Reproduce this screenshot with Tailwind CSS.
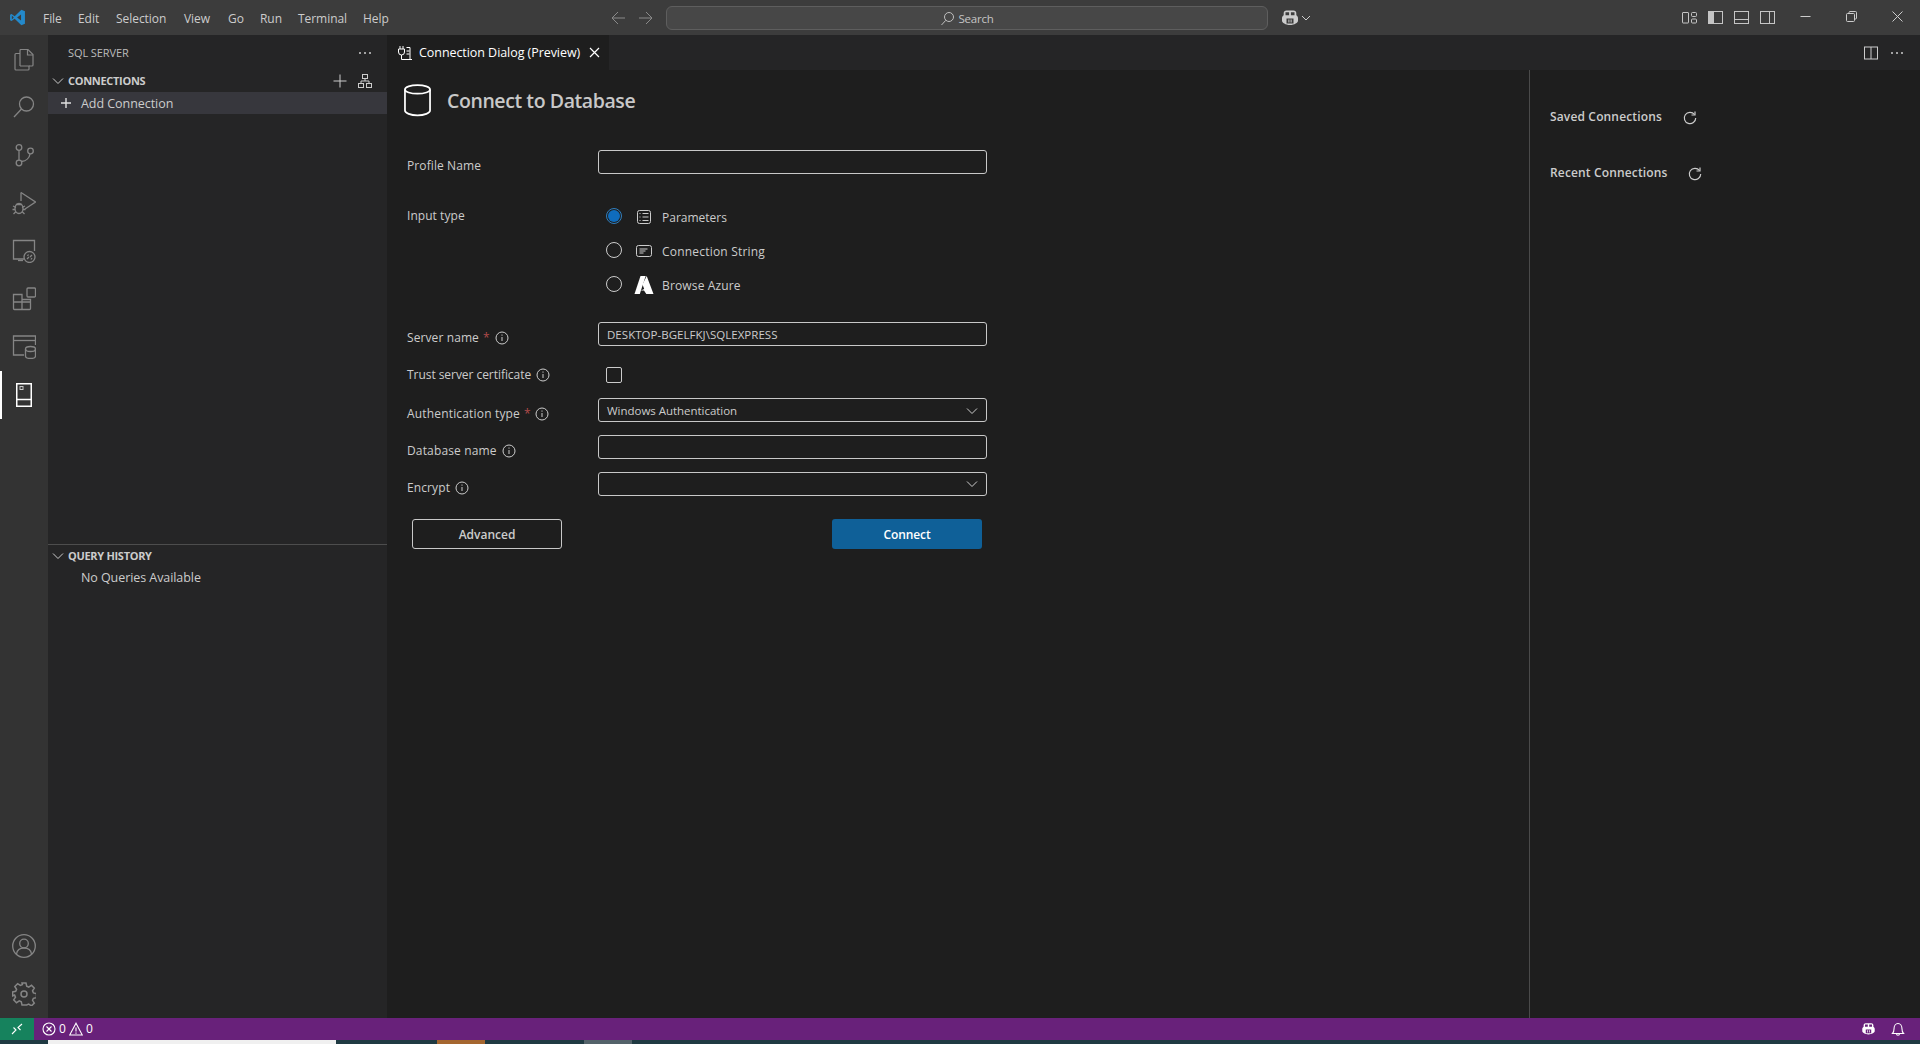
<!DOCTYPE html>
<html lang="en">
<head>
<meta charset="utf-8">
<title>Connection Dialog</title>
<script src="https://cdn.jsdelivr.net/npm/@tailwindcss/browser@4"></script>
</head>
<body class="w-[1920px] h-[1044px] overflow-hidden bg-[#1f3a42] font-['Open_Sans','Noto_Sans',sans-serif] text-[12px] text-[#cccccc]">

<!-- Title bar -->
<header class="h-[35px] bg-[#3c3c3c] flex items-center relative">
  <div class="w-[35px] flex justify-center">
    <svg width="17" height="17" viewBox="0 0 24 24"><path fill="#2489ca" d="M17.5 1 8 10.3 3.6 7 1.5 8v8l2.100 1L8 13.700 17.500 23l5-2.200V3.200zM4 14.800V9.200L6.800 12zM17 16.400 11.400 12 17 7.600z"/></svg>
  </div>
  <nav class="flex text-[#cccccc] tracking-[-0.05px] pt-[2px]">
    <span class="ml-[8px] w-[35px]">File</span>
    <span class="w-[38px]">Edit</span>
    <span class="w-[68px]">Selection</span>
    <span class="w-[44px]">View</span>
    <span class="w-[32px]">Go</span>
    <span class="w-[38px]">Run</span>
    <span class="w-[65px]">Terminal</span>
    <span>Help</span>
  </nav>
  <div class="absolute left-[611px] top-[11px] flex gap-[12px] text-[#8a8a8a]">
    <svg width="15" height="14" viewBox="0 0 15 14" fill="none" stroke="currentColor"><path d="M14 7H1M7 1 1 7l6 6"/></svg>
    <svg width="15" height="14" viewBox="0 0 15 14" fill="none" stroke="currentColor"><path d="M1 7h13M8 1l6 6-6 6"/></svg>
  </div>
  <div class="absolute left-[666px] top-[6px] w-[602px] h-[24px] rounded-[6px] border border-[#5e5e5e] bg-[#474747] flex items-center justify-center gap-[3px]">
    <svg width="15" height="15" viewBox="0 0 15 15" fill="none" stroke="#c0c0c0"><circle cx="9" cy="6" r="4.500"/><path d="M5.800 9.300 1.500 14"/></svg>
    <span class="text-[#c4c4c4] text-[11.500px] tracking-[-0.2px] pt-[1px]">Search</span>
  </div>
  <div class="absolute left-[1281px] top-[9px] flex items-center gap-[2px]">
    <svg width="18" height="18" viewBox="0 0 18 18" fill="#cccccc"><path d="M5.500 1.500h7c1.700 0 2.800 1.100 2.800 2.700v2c1 .7 1.700 1.600 1.700 2.800v3c0 1.500-3.600 4-8 4s-8-2.500-8-4V9c0-1.200.7-2.100 1.700-2.800v-2c0-1.600 1.100-2.700 2.800-2.700z"/><path fill="#3c3c3c" d="M4.500 3.200h3.600v3H4.500zM9.900 3.200h3.600v3H9.900zM5.500 9.500h7v5h-7z"/><path fill="#cccccc" d="M7.400 10.500h1v3h-1zM9.600 10.500h1v3h-1z"/></svg>
    <svg width="10" height="10" viewBox="0 0 10 10" fill="none" stroke="#cccccc"><path d="m1 3 4 4 4-4"/></svg>
  </div>
  <div class="absolute left-[1682px] top-[10px] flex gap-[11px] text-[#c5c5c5]">
    <svg width="15" height="15" viewBox="0 0 15 15" fill="none" stroke="currentColor"><rect x=".5" y="2.500" width="6" height="10.500" rx=".5"/><rect x="9.500" y="2.500" width="5" height="4" rx="1"/><rect x="9.500" y="9" width="5" height="4" rx="1"/></svg>
    <svg width="15" height="15" viewBox="0 0 15 15" fill="none" stroke="currentColor"><rect x=".5" y="1.500" width="14" height="12"/><rect x=".5" y="1.500" width="5" height="12" fill="currentColor"/></svg>
    <svg width="15" height="15" viewBox="0 0 15 15" fill="none" stroke="currentColor"><rect x=".5" y="1.500" width="14" height="12"/><path d="M.5 9.500h14"/></svg>
    <svg width="15" height="15" viewBox="0 0 15 15" fill="none" stroke="currentColor"><rect x=".5" y="1.500" width="14" height="12"/><path d="M9.500 1.500v12"/></svg>
  </div>
  <div class="absolute left-[1783px] top-0 h-[35px] flex items-center text-[#cccccc]">
    <span class="w-[45px] flex justify-center -mt-[2px]"><svg width="11" height="11" viewBox="0 0 11 11" stroke="currentColor"><path d="M.5 5.500h10"/></svg></span>
    <span class="w-[46px] flex justify-center -mt-[2px]"><svg width="11" height="11" viewBox="0 0 11 11" fill="none" stroke="currentColor"><rect x=".5" y="2.500" width="8" height="8" rx="1"/><path d="M3 2.500V1.500a1 1 0 0 1 1-1h5.500a1 1 0 0 1 1 1V7a1 1 0 0 1-1 1h-1"/></svg></span>
    <span class="w-[46px] flex justify-center -mt-[2px]"><svg width="11" height="11" viewBox="0 0 11 11" stroke="currentColor"><path d="m.5.500 10 10M10.500.500l-10 10"/></svg></span>
  </div>
</header>

<main class="h-[983px] flex">
  <!-- Activity bar -->
  <aside class="w-[48px] bg-[#333333] flex flex-col justify-between text-[#858585]">
    <div class="flex flex-col">
      <div class="h-[48px] flex items-center justify-center"><svg width="24" height="24" viewBox="0 0 24 24" fill="none" stroke="currentColor" stroke-width="1.200"><path d="M8 2.500h8l5 5v10.500a1 1 0 0 1-1 1h-3"/><path d="M8 19V3.500a1 1 0 0 1 1-1"/><path d="M15.500 2.500v5.500H21"/><path d="M8 6.500H4a1 1 0 0 0-1 1V22a1 1 0 0 0 1 1h12a1 1 0 0 0 1-1v-3H8"/></svg></div>
      <div class="h-[48px] flex items-center justify-center"><svg width="24" height="24" viewBox="0 0 24 24" fill="none" stroke="currentColor" stroke-width="1.300"><circle cx="14.500" cy="9" r="7"/><path d="M9.500 14 2 22"/></svg></div>
      <div class="h-[48px] flex items-center justify-center"><svg width="24" height="24" viewBox="0 0 24 24" fill="none" stroke="currentColor" stroke-width="1.300"><circle cx="7" cy="4.500" r="2.800"/><circle cx="7" cy="20" r="2.800"/><circle cx="18.500" cy="8" r="2.800"/><path d="M7 7.300v9.900M9.500 18.500c5-.5 8-4 8.500-7.700"/></svg></div>
      <div class="h-[48px] flex items-center justify-center"><svg width="24" height="24" viewBox="0 0 24 24" fill="none" stroke="currentColor" stroke-width="1.300"><path d="M9 1.500 23.500 11 13 18"/><path d="M9 1.500V10"/><ellipse cx="7" cy="17.500" rx="4" ry="5"/><path d="M4 13.500h6M1 15l3 1.500M13 15l-3 1.500M.5 18.500h2.500M11 18.500h2.500M1.500 23l2.500-2.500M12.500 23 10 20.500" /></svg></div>
      <div class="h-[48px] flex items-center justify-center"><svg width="24" height="24" viewBox="0 0 24 24" fill="none" stroke="currentColor" stroke-width="1.300"><path d="M12 20H1.500V1.500h21V12"/><path d="M6 21.500h5"/><circle cx="17.500" cy="18" r="5.500"/><path d="m15 20 2-2M18 18l2-2M15.500 17l1-1.500M19 20.500l1-1.500"/></svg></div>
      <div class="h-[48px] flex items-center justify-center"><svg width="24" height="24" viewBox="0 0 24 24" fill="none" stroke="currentColor" stroke-width="1.300"><rect x="15" y="1" width="8.500" height="9" rx="1"/><path d="M1.500 7.500h8.500v15H2.500a1 1 0 0 1-1-1zM1.500 15h17v6.500a1 1 0 0 1-1 1H10M10 15V8M18.500 15V12.500h-8.500"/></svg></div>
      <div class="h-[48px] flex items-center justify-center"><svg width="24" height="24" viewBox="0 0 24 24" fill="none" stroke="currentColor" stroke-width="1.300"><path d="M12 20H1.500V1h22v9"/><path d="M1.500 5.500h22"/><ellipse cx="18.500" cy="14" rx="5" ry="2.500"/><path d="M13.500 14v7c0 1.500 2.200 2.500 5 2.500s5-1 5-2.500v-7"/></svg></div>
      <div class="h-[48px] flex items-center justify-center relative">
        <span class="absolute left-0 top-0 w-[2px] h-[48px] bg-white"></span>
        <svg width="24" height="24" viewBox="0 0 24 24" fill="none" stroke="#ffffff" stroke-width="1.500"><rect x="4.750" y=".750" width="14.500" height="22.500"/><path d="M4.750 16.500h14.500"/><rect x="8" y="3.500" width="3" height="3" stroke-width="1" stroke="#c8c8c8"/></svg>
      </div>
    </div>
    <div class="flex flex-col">
      <div class="h-[48px] flex items-center justify-center"><svg width="24" height="24" viewBox="0 0 24 24" fill="none" stroke="currentColor" stroke-width="1.300"><circle cx="12" cy="12" r="11.300"/><circle cx="12" cy="9.500" r="4.300"/><path d="M4.500 20c.5-3.500 3-6 7.500-6s7 2.500 7.500 6"/></svg></div>
      <div class="h-[48px] flex items-center justify-center"><svg width="24" height="24" viewBox="0 0 24 24" fill="none" stroke="currentColor" stroke-width="1.500"><path d="M10 1h4l.7 3.200 2 .9 2.800-1.800 2.800 2.800-1.800 2.800.9 2 3.100.7v4l-3.100.7-.9 2 1.800 2.800-2.800 2.800-2.800-1.800-2 .9L14 23h-4l-.7-3.200-2-.9-2.800 1.800-2.800-2.800 1.800-2.800-.9-2L.6 14v-4l3.100-.7.900-2-1.800-2.800 2.800-2.800 2.800 1.800 2-.9z"/><circle cx="12" cy="12" r="3"/></svg></div>
    </div>
  </aside>

  <!-- Side bar -->
  <section class="w-[339px] bg-[#252526] flex flex-col">
    <div class="h-[35px] flex items-center justify-between pl-[20px] pr-[15px]">
      <span class="text-[11px] text-[#bbbbbb] tracking-[-0.1px] pt-[2px]">SQL SERVER</span>
      <svg width="14" height="4" viewBox="0 0 14 4" fill="#cccccc"><circle cx="2" cy="2" r="1"/><circle cx="7" cy="2" r="1"/><circle cx="12" cy="2" r="1"/></svg>
    </div>
    <div class="h-[22px] flex items-center pl-[2px] pr-[15px]">
      <svg width="16" height="16" viewBox="0 0 16 16" fill="none" stroke="#cccccc"><path d="m3 5.500 5 5 5-5"/></svg>
      <span class="ml-[2px] font-bold text-[11px] tracking-[-0.3px] text-[#cccccc]">CONNECTIONS</span>
      <svg class="ml-auto" width="14" height="14" viewBox="0 0 14 14" stroke="#cccccc"><path d="M7 .500v13M.500 7h13"/></svg>
      <svg class="ml-[11px]" width="14" height="14" viewBox="0 0 14 14" fill="none" stroke="#cccccc"><rect x="4.500" y=".500" width="5" height="4"/><rect x=".500" y="9.500" width="5" height="4"/><rect x="8.500" y="9.500" width="5" height="4"/><path d="M7 4.500V7M3 9.500V7h8v2.500"/></svg>
    </div>
    <div class="h-[22px] bg-[#37373d] flex items-center pl-[13px]">
      <svg class="-ml-[1px]" width="12" height="12" viewBox="0 0 12 12" stroke="#e0e0e0" stroke-width="1.400"><path d="M6 1v10M1 6h10"/></svg>
      <span class="ml-[9px] text-[12.500px] tracking-[-0.05px] text-[#cccccc] pt-[2px]">Add Connection</span>
    </div>
    <div class="flex-1"></div>
    <div class="h-[474px] border-t border-[#4d4d4d]">
      <div class="h-[22px] flex items-center pl-[2px]">
        <svg width="16" height="16" viewBox="0 0 16 16" fill="none" stroke="#cccccc"><path d="m3 5.500 5 5 5-5"/></svg>
        <span class="ml-[2px] font-bold text-[11px] tracking-[-0.3px] text-[#cccccc]">QUERY HISTORY</span>
      </div>
      <div class="h-[22px] flex items-center pl-[33px] text-[12.500px] tracking-[-0.07px] text-[#cccccc]">No Queries Available</div>
    </div>
  </section>

  <!-- Editor -->
  <section class="flex-1 flex flex-col bg-[#1e1e1e]">
    <div class="h-[35px] bg-[#252526] flex">
      <div class="w-[222px] bg-[#1e1e1e] flex items-center pl-[10px]">
        <svg width="16" height="16" viewBox="0 0 16 16" fill="none" stroke="#ffffff"><path d="M3 1v3M6 1v3M1.500 4h6v3a3 3 0 0 1-6 0zM4.500 10v4.500h10.500M9.500 2.500h3.500v12M9.500 6h3M9.500 9h3"/></svg>
        <span class="ml-[6px] text-[12.500px] tracking-[-0.06px] text-white pt-[2px]">Connection Dialog (Preview)</span>
        <svg class="ml-[9px]" width="11" height="11" viewBox="0 0 11 11" stroke="#ffffff" stroke-width="1.200"><path d="m1 1 9 9M10 1l-9 9"/></svg>
      </div>
      <div class="ml-auto flex items-center gap-[12px] pr-[16px]">
        <svg width="14" height="14" viewBox="0 0 14 14" fill="none" stroke="#cccccc"><rect x=".5" y="1" width="13" height="12"/><path d="M7 1v12"/></svg>
        <svg width="14" height="4" viewBox="0 0 14 4" fill="#cccccc"><circle cx="2" cy="2" r="1"/><circle cx="7" cy="2" r="1"/><circle cx="12" cy="2" r="1"/></svg>
      </div>
    </div>
    <div class="flex-1 flex">
      <div class="flex-1 pl-[20px] flex flex-col">
        <!-- Heading -->
        <div class="h-[34px] mt-[13px] -ml-[3px] flex items-center">
          <svg width="27" height="34" viewBox="0 0 28 34" fill="none" stroke="#ffffff" stroke-width="1.800"><ellipse cx="14" cy="6" rx="13" ry="4.500"/><path d="M1 6v22c0 2.500 5.800 5 13 5s13-2.500 13-5V6"/></svg>
          <h1 class="ml-[16px] text-[19.500px] font-semibold text-[#c8c8c8] tracking-[-0.42px] pt-[2px]">Connect to Database</h1>
        </div>
        <!-- Profile -->
        <div class="mt-[33px] flex h-[24px]">
          <label class="w-[191px] pt-[7px] leading-[18px] tracking-[0.1px]">Profile Name</label>
          <div class="w-[389px] h-[24px] rounded-[3px] border border-[#c8c8c8]"></div>
        </div>
        <!-- Input type -->
        <div class="mt-[26px] flex h-[102px]">
          <label class="w-[191px] pt-[7px] leading-[18px] tracking-[0.05px]">Input type</label>
          <div class="flex flex-col text-[12px]">
            <div class="h-[34px] flex items-center pl-[8px]">
              <span class="w-[16px] h-[16px] -mt-[2px] rounded-full border border-[#2f7fc0] flex items-center justify-center"><span class="w-[12px] h-[12px] rounded-full bg-[#0f6cbd]"></span></span>
              <svg class="ml-[14px]" width="16" height="16" viewBox="0 0 16 16" fill="none" stroke="#cccccc"><rect x="1.500" y="1.500" width="13" height="13" rx="2"/><path d="M6.500 4.500h6M6.500 8h6M6.500 11.500h6M3.500 4.500h1M3.500 8h1M3.500 11.500h1"/></svg>
              <span class="ml-[10px] pt-[1px]">Parameters</span>
            </div>
            <div class="h-[34px] flex items-center pl-[8px]">
              <span class="w-[16px] h-[16px] -mt-[2px] rounded-full border border-[#cccccc]"></span>
              <svg class="ml-[14px]" width="16" height="16" viewBox="0 0 16 16" fill="none" stroke="#cccccc"><rect x=".500" y="2.500" width="15" height="11" rx="2"/><path d="M3.500 6h8M3.500 8h6M3.500 10h4"/></svg>
              <span class="ml-[10px] pt-[1px] tracking-[0.2px]">Connection String</span>
            </div>
            <div class="h-[34px] flex items-center pl-[8px]">
              <span class="w-[16px] h-[16px] -mt-[2px] rounded-full border border-[#cccccc]"></span>
              <svg class="ml-[12px]" width="20" height="20" viewBox="0 0 20 20" fill="#ffffff"><path d="M6.500 1h5.200L5.800 19H.5z"/><path d="M12.700 1 19.500 19h-7.200L10 15.500H6.800l3.400-1.400-1.700-4.500z"/></svg>
              <span class="ml-[8px] pt-[1px] tracking-[0.15px]">Browse Azure</span>
            </div>
          </div>
        </div>
        <!-- Server -->
        <div class="mt-[20px] flex h-[24px]">
          <label class="w-[191px] pt-[8px] leading-[18px] tracking-[0.1px] flex items-center h-[24px]"><span>Server name</span><span class="text-[#b04a4a] ml-[4px]">*</span><svg class="ml-[5px]" width="14" height="14" viewBox="0 0 14 14" fill="none" stroke="#cccccc"><circle cx="7" cy="7" r="6"/><path d="M7 6v4M7 3.500v1.200"/></svg></label>
          <div class="w-[389px] h-[24px] pt-[1px] rounded-[3px] border border-[#c8c8c8] flex items-center pl-[8px] text-[11.500px] tracking-[0.03px] text-[#cccccc]">DESKTOP-BGELFKJ\SQLEXPRESS</div>
        </div>
        <!-- Trust -->
        <div class="mt-[16px] flex h-[24px] items-center">
          <label class="w-[191px] pt-[2px] leading-[18px] tracking-[-0.05px] flex items-center"><span>Trust server certificate</span><svg class="ml-[5px]" width="14" height="14" viewBox="0 0 14 14" fill="none" stroke="#cccccc"><circle cx="7" cy="7" r="6"/><path d="M7 6v4M7 3.500v1.200"/></svg></label>
          <span class="ml-[8px] mt-[2px] w-[16px] h-[16px] rounded-[2px] border border-[#cccccc]"></span>
        </div>
        <!-- Auth -->
        <div class="mt-[12px] flex h-[24px]">
          <label class="w-[191px] pt-[8px] leading-[18px] tracking-[0.17px] flex items-center h-[24px]"><span>Authentication type</span><span class="text-[#b04a4a] ml-[4px]">*</span><svg class="ml-[4px]" width="14" height="14" viewBox="0 0 14 14" fill="none" stroke="#cccccc"><circle cx="7" cy="7" r="6"/><path d="M7 6v4M7 3.500v1.200"/></svg></label>
          <div class="w-[389px] h-[24px] pt-[1px] rounded-[3px] border border-[#c8c8c8] flex items-center justify-between pl-[8px] pr-[8px] text-[11.500px] tracking-[-0.03px] text-[#cccccc]"><span>Windows Authentication</span><svg width="12" height="12" viewBox="0 0 12 12" fill="none" stroke="#cccccc"><path d="m1 3.500 5 5 5-5"/></svg></div>
        </div>
        <!-- DB -->
        <div class="mt-[13px] flex h-[24px]">
          <label class="w-[191px] pt-[8px] leading-[18px] tracking-[0.15px] flex items-center h-[24px]"><span>Database name</span><svg class="ml-[5px]" width="14" height="14" viewBox="0 0 14 14" fill="none" stroke="#cccccc"><circle cx="7" cy="7" r="6"/><path d="M7 6v4M7 3.500v1.200"/></svg></label>
          <div class="w-[389px] h-[24px] rounded-[3px] border border-[#c8c8c8]"></div>
        </div>
        <!-- Encrypt -->
        <div class="mt-[13px] flex h-[24px]">
          <label class="w-[191px] pt-[8px] leading-[18px] tracking-[0.1px] flex items-center h-[24px]"><span>Encrypt</span><svg class="ml-[5px]" width="14" height="14" viewBox="0 0 14 14" fill="none" stroke="#cccccc"><circle cx="7" cy="7" r="6"/><path d="M7 6v4M7 3.500v1.200"/></svg></label>
          <div class="w-[389px] h-[24px] rounded-[3px] border border-[#c8c8c8] flex items-center justify-end pr-[8px]"><svg width="12" height="12" viewBox="0 0 12 12" fill="none" stroke="#cccccc"><path d="m1 3.500 5 5 5-5"/></svg></div>
        </div>
        <!-- Buttons -->
        <div class="mt-[23px] ml-[5px] w-[570px] flex justify-between">
          <button class="w-[150px] h-[30px] pt-[1px] rounded-[3px] border border-[#c8c8c8] font-semibold text-[12px] text-[#cccccc]">Advanced</button>
          <button class="w-[150px] h-[30px] pt-[1px] rounded-[3px] bg-[#0f6098] font-semibold text-[12px] tracking-[-0.1px] text-white">Connect</button>
        </div>
      </div>
      <!-- Right pane -->
      <div class="w-[391px] border-l border-[#4a4a4a] pl-[20px] pt-[37px] font-semibold text-[12px] tracking-[0.15px] text-[#cccccc]">
        <div class="h-[20px] flex items-center"><span>Saved Connections</span><svg class="ml-[21px] mt-[2px]" width="14" height="14" viewBox="0 0 14 14" fill="none" stroke="#cccccc" stroke-width="1.200"><path d="M11.500 3.500A5.700 5.700 0 1 0 12.700 7"/><path d="M12 .500v3.500H8.500"/></svg></div>
        <div class="h-[20px] mt-[36px] flex items-center"><span>Recent Connections</span><svg class="ml-[20px] mt-[2px]" width="14" height="14" viewBox="0 0 14 14" fill="none" stroke="#cccccc" stroke-width="1.200"><path d="M11.500 3.500A5.700 5.700 0 1 0 12.700 7"/><path d="M12 .500v3.500H8.500"/></svg></div>
      </div>
    </div>
  </section>
</main>

<!-- Status bar -->
<footer class="h-[22px] bg-[#68217a] flex items-center text-white">
  <div class="w-[34px] h-[22px] bg-[#16825d] flex items-center justify-center">
    <svg width="12" height="12" viewBox="0 0 12 12" fill="none" stroke="#ffffff" stroke-width="1.100"><path d="m1 11 4-4-2.500-2.500M11 1 7 4.500l2.500 2.500"/></svg>
  </div>
  <div class="ml-[8px] flex items-center text-[12px]">
    <svg width="14" height="14" viewBox="0 0 14 14" fill="none" stroke="#ffffff" stroke-width="1.100"><circle cx="7" cy="7" r="6"/><path d="m4.500 4.500 5 5M9.500 4.500l-5 5"/></svg>
    <span class="ml-[3px]">0</span>
    <svg class="ml-[3px]" width="14" height="14" viewBox="0 0 14 14" fill="none" stroke="#ffffff" stroke-width="1.100"><path d="M7 1.200 13.300 13H.7zM7 5.500v4M7 10.500v1.200"/></svg>
    <span class="ml-[3px]">0</span>
  </div>
  <div class="ml-auto flex items-center gap-[15px] pr-[15px]">
    <svg width="15" height="14" viewBox="0 0 18 18" fill="#ffffff"><path d="M5.500 1.500h7c1.700 0 2.800 1.100 2.800 2.700v2c1 .7 1.700 1.600 1.700 2.800v3c0 1.500-3.600 4-8 4s-8-2.500-8-4V9c0-1.200.7-2.100 1.700-2.800v-2c0-1.600 1.100-2.700 2.800-2.700z"/><path fill="#68217a" d="M4.500 3.200h3.600v3H4.500zM9.900 3.200h3.600v3H9.900zM5.500 9.500h7v5h-7z"/><path d="M7.400 10.500h1v3h-1zM9.600 10.500h1v3h-1z"/></svg>
    <svg width="14" height="14" viewBox="0 0 14 14" fill="none" stroke="#ffffff" stroke-width="1.100"><path d="M1.500 11.500c1-1 1.500-2 1.500-4.500 0-3 1.700-5.500 4-5.500S11 4 11 7c0 2.500.5 3.500 1.500 4.500zM5.500 11.500c0 1 .7 1.800 1.500 1.800s1.500-.8 1.500-1.800"/></svg>
  </div>
</footer>

<!-- Desktop sliver under the window -->
<div class="h-[4px] flex">
  <span class="ml-[48px] w-[288px] bg-[#f0f0f0]"></span>
  <span class="ml-[101px] w-[48px] bg-[#a5662f]"></span>
  <span class="ml-[99px] w-[48px] bg-[#54636a]"></span>
</div>
</body>
</html>
